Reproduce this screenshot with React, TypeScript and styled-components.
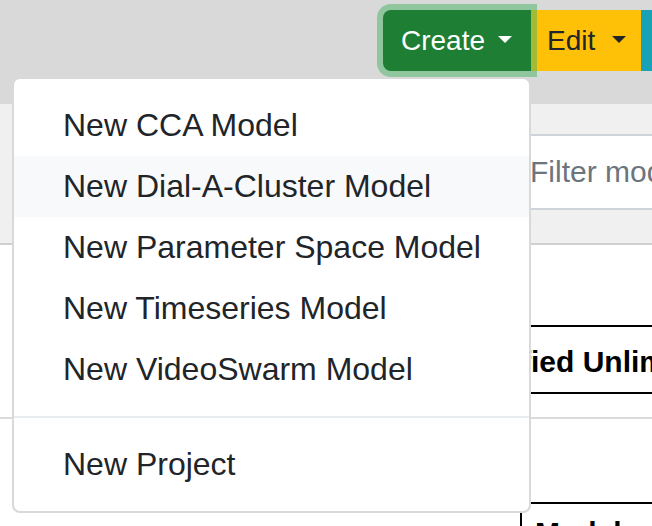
import React from "react";
import styled, { createGlobalStyle } from "styled-components";

const Global = createGlobalStyle`
  html, body { margin: 0; padding: 0; background: #fff; }
  body {
    font-family: "Liberation Sans", Arial, Helvetica, sans-serif;
    color: #212529;
    overflow: hidden;
  }
  *, *::before, *::after { box-sizing: border-box; }
`;

const Page = styled.div`
  position: relative;
  width: 652px;
  height: 526px;
  overflow: hidden;
  background: #fff;
`;

const TopBar = styled.header`
  height: 104px;
  background: #d9d9d9;
  display: flex;
  align-items: flex-start;
  padding: 10px 0 0 383px;
`;

const ButtonGroup = styled.div`
  display: flex;
  flex-shrink: 0;
`;

const variants = {
  success: { bg: "#1e7e34", fg: "#fff" },
  warning: { bg: "#ffc107", fg: "#212529" },
  info: { bg: "#17a2b8", fg: "#fff" },
};

const Btn = styled.button<{
  $variant: keyof typeof variants;
  $pad: string;
  $gap: number;
  $focus?: boolean;
  $first?: boolean;
}>`
  position: relative;
  display: flex;
  align-items: center;
  gap: ${(p) => p.$gap}px;
  height: 61px;
  margin: 0;
  border: 0;
  padding: ${(p) => p.$pad};
  font-family: inherit;
  font-size: 28px;
  line-height: 45px;
  background: ${(p) => variants[p.$variant].bg};
  color: ${(p) => variants[p.$variant].fg};
  border-radius: ${(p) => (p.$first ? "8px 0 0 8px" : "0")};
  z-index: ${(p) => (p.$focus ? 1 : 0)};
  box-shadow: ${(p) => (p.$focus ? "0 0 0 6px rgba(72, 180, 97, 0.5)" : "none")};
  white-space: nowrap;
`;

const Caret = styled.span`
  display: inline-block;
  width: 0;
  height: 0;
  margin-top: -3px;
  border-top: 7px solid currentColor;
  border-left: 7.5px solid transparent;
  border-right: 7.5px solid transparent;
`;

const FilterBar = styled.section`
  height: 141px;
  background: #f0f0f0;
  border-bottom: 2px solid #d0d0d0;
  padding: 30px 0 0 505px;
`;

const FilterInput = styled.input`
  display: block;
  width: 320px;
  height: 76px;
  border: 2px solid #ced4da;
  border-right: 0;
  background: #fff;
  padding: 0 0 0 23px;
  font-family: inherit;
  font-size: 30px;
  color: #495057;
  outline: none;
  &::placeholder { color: #6c757d; }
`;

const Content = styled.main`
  padding-top: 80px;
`;

const Table = styled.div<{ $mt?: number }>`
  margin: ${(p) => p.$mt ?? 0}px 0 0 300px;
  border-top: 2px solid #000;
`;

const HeadRow = styled.div`
  display: flex;
  border-bottom: 2px solid #000;
  padding: 12px 0 8px 151px;
`;

const Th = styled.div<{ $width?: number; $divided?: boolean }>`
  flex: ${(p) => (p.$width ? `0 0 ${p.$width}px` : "1 1 auto")};
  font-size: 30px;
  line-height: 45px;
  font-weight: 700;
  color: #000;
  white-space: nowrap;
  border-left: ${(p) => (p.$divided ? "2px solid #000" : "0")};
  padding-left: ${(p) => (p.$divided ? 13 : 0)}px;
`;

const Row = styled.div`
  display: flex;
  height: 30px;
`;

const CellText = styled.span`
  display: block;
  padding-top: 6px;
`;

const Rule = styled.hr`
  margin: 23px 0 0;
  border: 0;
  border-top: 2px solid #dadada;
  height: 0;
`;

const Menu = styled.div`
  position: absolute;
  top: 77px;
  left: 12px;
  width: 519px;
  background: #fff;
  border: 2px solid rgba(0, 0, 0, 0.15);
  border-radius: 8px;
  padding: 16px 0;
  z-index: 5;
`;

const MenuItem = styled.a<{ $active?: boolean }>`
  display: block;
  padding: 8px 48px 8px 49px;
  font-size: 32px;
  line-height: 45px;
  color: #212529;
  text-decoration: none;
  white-space: nowrap;
  background: ${(p) => (p.$active ? "#f8f9fa" : "transparent")};
`;

const Divider = styled.div`
  height: 0;
  margin: 16px 0;
  border-top: 2px solid #e9ecef;
`;

const models = [
  "New CCA Model",
  "New Dial-A-Cluster Model",
  "New Parameter Space Model",
  "New Timeseries Model",
  "New VideoSwarm Model",
];

export default function App() {
  return (
    <Page>
      <Global />
      <TopBar>
        <ButtonGroup>
          <Btn $variant="success" $pad="0 19px 0 18px" $gap={13} $focus $first>
            Create <Caret />
          </Btn>
          <Btn $variant="warning" $pad="0 15px 0 16px" $gap={17}>
            Edit <Caret />
          </Btn>
          <Btn $variant="info" $pad="0 16px" $gap={16}>
            Help <Caret />
          </Btn>
        </ButtonGroup>
      </TopBar>
      <FilterBar>
        <FilterInput placeholder="Filter models" />
      </FilterBar>
      <Content>
        <Table>
          <HeadRow>
            <Th>Modified Unlimited</Th>
          </HeadRow>
        </Table>
        <Rule />
        <Table $mt={83}>
          <Row>
            <Th $width={220} />
            <Th $divided>
              <CellText>Model</CellText>
            </Th>
          </Row>
        </Table>
      </Content>
      <Menu>
        {models.map((m, i) => (
          <MenuItem key={m} href="#" $active={i === 1}>
            {m}
          </MenuItem>
        ))}
        <Divider />
        <MenuItem href="#">New Project</MenuItem>
      </Menu>
    </Page>
  );
}
